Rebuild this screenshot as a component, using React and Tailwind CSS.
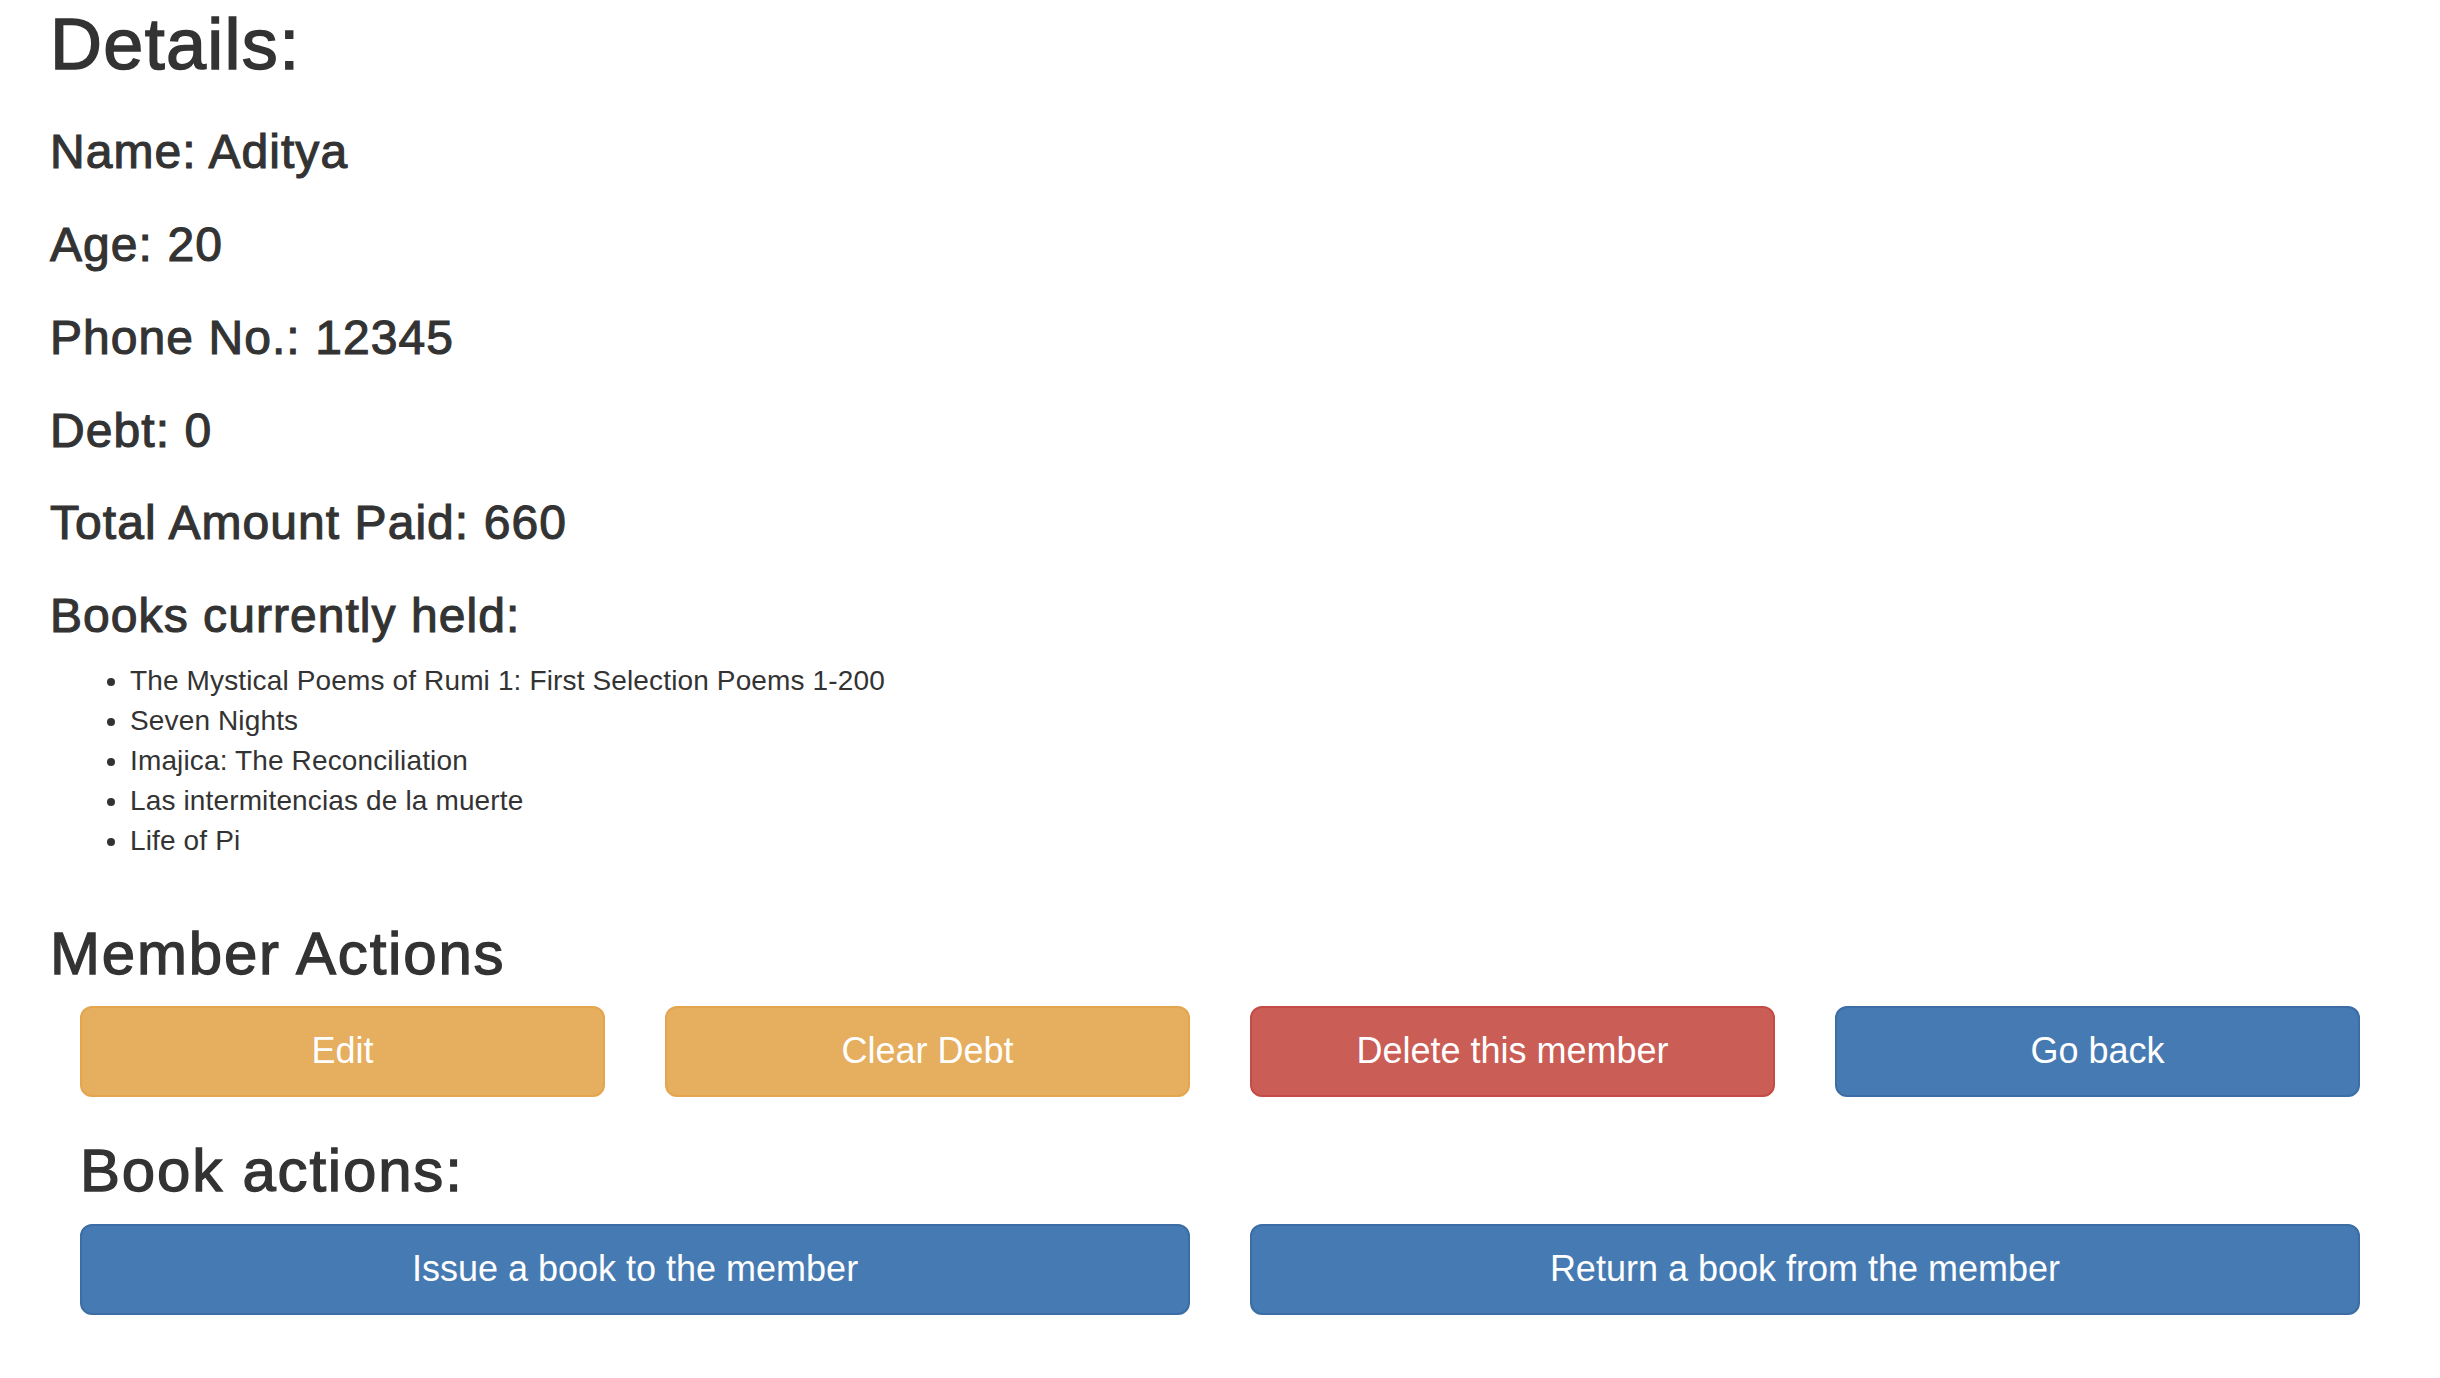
import React from 'react';

const info = [
  ['Name', 'Aditya'],
  ['Age', '20'],
  ['Phone No.', '12345'],
  ['Debt', '0'],
  ['Total Amount Paid', '660'],
];

const books = [
  'The Mystical Poems of Rumi 1: First Selection Poems 1-200',
  'Seven Nights',
  'Imajica: The Reconciliation',
  'Las intermitencias de la muerte',
  'Life of Pi',
];

const btnBase = 'h-[91px] flex items-center justify-center rounded-[12px] border-2 text-white text-[36px] leading-[48px]';
const warn = btnBase + ' bg-[#e6ae5f] border-[#e4a54f]';
const danger = btnBase + ' bg-[#ca5d55] border-[#c54c46]';
const primary = btnBase + ' bg-[#467ab2] border-[#3c6da4]';

const h3 = 'text-[48px] leading-[1.1] tracking-[0.022em] [-webkit-text-stroke:1.1px_#333]';
const h2 = 'text-[60px] leading-[1.1] tracking-[0.03em] [-webkit-text-stroke:1.3px_#333]';

export default function App() {
  return (
    <div className="min-h-screen bg-white px-[50px] text-[#333] font-['Liberation_Sans',Arial,sans-serif]">
      <h1 className="pt-[5px] mb-[42px] text-[72px] leading-[1.1] tracking-[0.018em] [-webkit-text-stroke:1.5px_#333]">Details:</h1>

      {info.map(([k, v]) => (
        <h3 key={k} className={'mb-[40px] ' + h3}>
          {k}: {v}
        </h3>
      ))}

      <h3 className={'mb-[18px] ' + h3}>Books currently held:</h3>
      <ul className="list-disc pl-[80px] text-[28px] leading-[40px] tracking-[0.005em]">
        {books.map(b => <li key={b}>{b}</li>)}
      </ul>

      <h2 className={'mt-[60px] ' + h2}>Member Actions</h2>
      <div className="mt-[19px] grid grid-cols-4 gap-[60px] px-[30px]">
        <button className={warn}>Edit</button>
        <button className={warn}>Clear Debt</button>
        <button className={danger}>Delete this member</button>
        <button className={primary}>Go back</button>
      </div>

      <div className="mt-[41px] px-[30px] pb-[60px]">
        <h2 className={h2}>Book actions:</h2>
        <div className="mt-[20px] grid grid-cols-2 gap-[60px]">
          <button className={primary}>Issue a book to the member</button>
          <button className={primary}>Return a book from the member</button>
        </div>
      </div>
    </div>
  );
}
